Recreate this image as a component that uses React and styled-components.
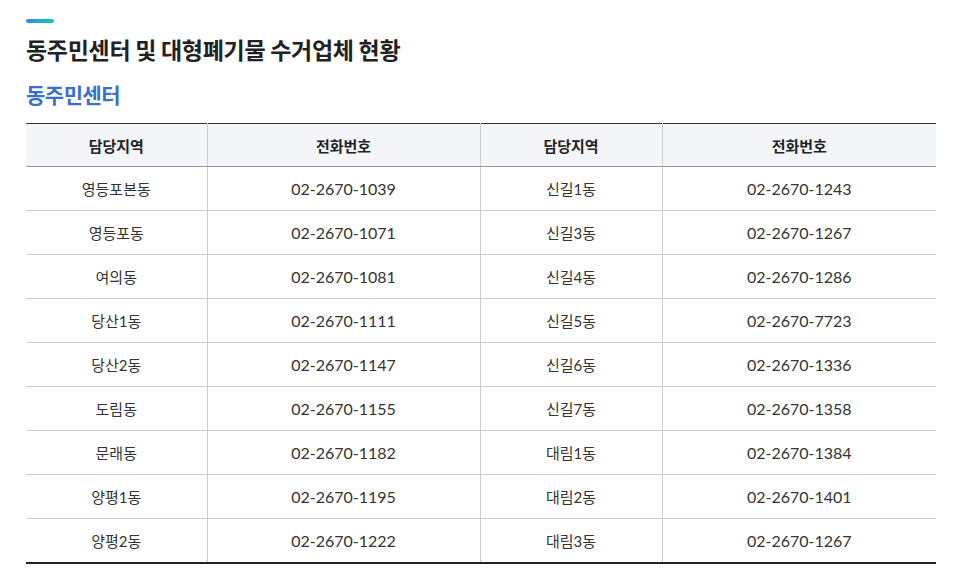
import React from "react";
import styled, { createGlobalStyle } from "styled-components";

const Global = createGlobalStyle`
  html, body { margin: 0; padding: 0; background: #fff; }
  body { font-family: Lato, "Noto Sans CJK KR", sans-serif; color: #333; }
`;

const Page = styled.div`
  padding: 19px 23px 0 26px;
  width: 910px;
`;

const Accent = styled.div`
  width: 28px;
  height: 4px;
  border-radius: 2px;
  background: linear-gradient(90deg, #3a8ad8, #0ccab4);
`;

const Title = styled.h2`
  margin: 10px 0 0;
  font-family: "Noto Sans CJK KR", sans-serif;
  font-size: 23px;
  font-weight: 700;
  line-height: 32px;
  color: #222;
  letter-spacing: -0.3px;
`;

const SubTitle = styled.h3`
  margin: 15px 0 0;
  font-family: "Noto Sans CJK KR", sans-serif;
  font-size: 21px;
  font-weight: 700;
  line-height: 28px;
  color: #3a6fc5;
  letter-spacing: -0.5px;
`;

const Table = styled.table`
  margin-top: 15px;
  width: 910px;
  border-collapse: collapse;
  table-layout: fixed;
  border-top: 1px solid #333;
  border-bottom: 2px solid #222;
`;

const Th = styled.th`
  height: 42px;
  padding: 0;
  background: #f4f5f9;
  font-family: "Noto Sans CJK KR", sans-serif;
  font-size: 15px;
  font-weight: 700;
  color: #222;
  text-align: center;
  border-bottom: 1px solid #999;
  border-left: 1px solid #ccc;
  &:first-child { border-left: none; }
`;

const Td = styled.td`
  height: 43px;
  padding: 0;
  text-align: center;
  font-family: Lato, "Noto Sans CJK KR", sans-serif;
  font-size: ${(p) => (p.$num ? "16px" : "15px")};
  color: #333;
  border-bottom: 1px solid #ccc;
  border-left: 1px solid #ccc;
  &:first-child { border-left: none; }
`;

const Row = styled.tr`
  &:last-child td { border-bottom: none; }
`;

const data = [
  ["영등포본동", "02-2670-1039", "신길1동", "02-2670-1243"],
  ["영등포동", "02-2670-1071", "신길3동", "02-2670-1267"],
  ["여의동", "02-2670-1081", "신길4동", "02-2670-1286"],
  ["당산1동", "02-2670-1111", "신길5동", "02-2670-7723"],
  ["당산2동", "02-2670-1147", "신길6동", "02-2670-1336"],
  ["도림동", "02-2670-1155", "신길7동", "02-2670-1358"],
  ["문래동", "02-2670-1182", "대림1동", "02-2670-1384"],
  ["양평1동", "02-2670-1195", "대림2동", "02-2670-1401"],
  ["양평2동", "02-2670-1222", "대림3동", "02-2670-1267"],
];

export default function App() {
  return (
    <Page>
      <Global />
      <Accent />
      <Title>동주민센터 및 대형폐기물 수거업체 현황</Title>
      <SubTitle>동주민센터</SubTitle>
      <Table>
        <colgroup>
          <col style={{ width: "181px" }} />
          <col style={{ width: "273px" }} />
          <col style={{ width: "182px" }} />
          <col style={{ width: "274px" }} />
        </colgroup>
        <thead>
          <tr>
            <Th>담당지역</Th>
            <Th>전화번호</Th>
            <Th>담당지역</Th>
            <Th>전화번호</Th>
          </tr>
        </thead>
        <tbody>
          {data.map((r, i) => (
            <Row key={i}>
              <Td>{r[0]}</Td>
              <Td $num>{r[1]}</Td>
              <Td>{r[2]}</Td>
              <Td $num>{r[3]}</Td>
            </Row>
          ))}
        </tbody>
      </Table>
    </Page>
  );
}
